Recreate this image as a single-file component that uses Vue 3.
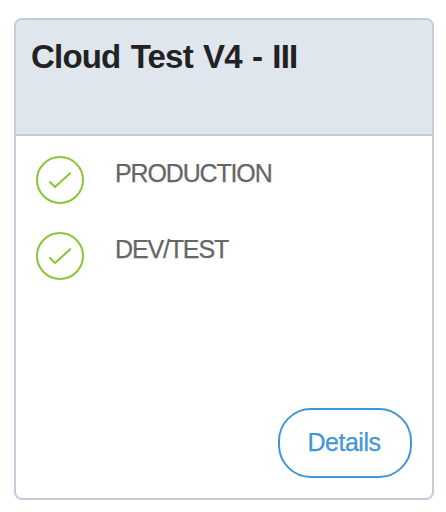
<script setup>
const environments = ['PRODUCTION', 'DEV/TEST']
</script>

<template>
  <main class="page">
    <article class="card">
      <header class="card-header">
        <h2 class="title"><span>Cloud Test V4 - III</span></h2>
      </header>
      <ul class="environments">
        <li v-for="name in environments" :key="name" class="environment">
          <svg class="check" viewBox="0 0 48 48" aria-hidden="true">
            <circle cx="24" cy="24" r="23" />
            <path d="M14 26L19 31L34.2 17.2" />
          </svg>
          <span class="name">{{ name }}</span>
        </li>
      </ul>
      <footer class="actions">
        <button class="details" type="button"><span>Details</span></button>
      </footer>
    </article>
  </main>
</template>

<style>
body {
  background: #fff;
}
</style>

<style scoped>
.page {
  box-sizing: border-box;
  height: 512px;
  padding: 18px 12px 12px 14px;
  font-family: "Liberation Sans", Arial, sans-serif;
}

.card {
  box-sizing: border-box;
  display: flex;
  flex-direction: column;
  height: 482px;
  border: 2px solid #c3ccda;
  border-radius: 8px;
  overflow: hidden;
  background: #fff;
}

.card-header {
  box-sizing: border-box;
  height: 116px;
  padding: 18px 15px;
  background: #dfe6ee;
  border-bottom: 2px solid #c3ccda;
}

.title {
  margin: 0;
  font-size: 33px;
  line-height: 38px;
  letter-spacing: -0.8px;
  word-spacing: 1.8px;
  font-weight: 700;
  color: #222;
  white-space: nowrap;
}

.environments {
  display: flex;
  flex-direction: column;
  gap: 28px;
  margin: 0;
  padding: 20px;
  list-style: none;
}

.environment {
  display: flex;
  gap: 31px;
  height: 48px;
}

.check {
  width: 48px;
  height: 48px;
  fill: none;
  stroke: #88c637;
  stroke-width: 2;
  stroke-linecap: round;
  stroke-linejoin: round;
}

.name {
  padding-top: 3px;
  font-size: 25px;
  line-height: 28px;
  letter-spacing: -1.15px;
  color: #666;
  -webkit-text-stroke: 0.25px #666;
}

.actions {
  display: flex;
  justify-content: flex-end;
  margin-top: auto;
  padding: 20px;
}

.details {
  box-sizing: border-box;
  width: 134px;
  height: 70px;
  padding: 0 2px 3px 0;
  border: 2px solid #4296d6;
  border-radius: 33px;
  background: #fff;
  color: #4296d6;
  font-family: inherit;
  font-size: 25px;
  line-height: 28px;
  letter-spacing: -0.5px;
  -webkit-text-stroke: 0.25px #4296d6;
}
</style>
